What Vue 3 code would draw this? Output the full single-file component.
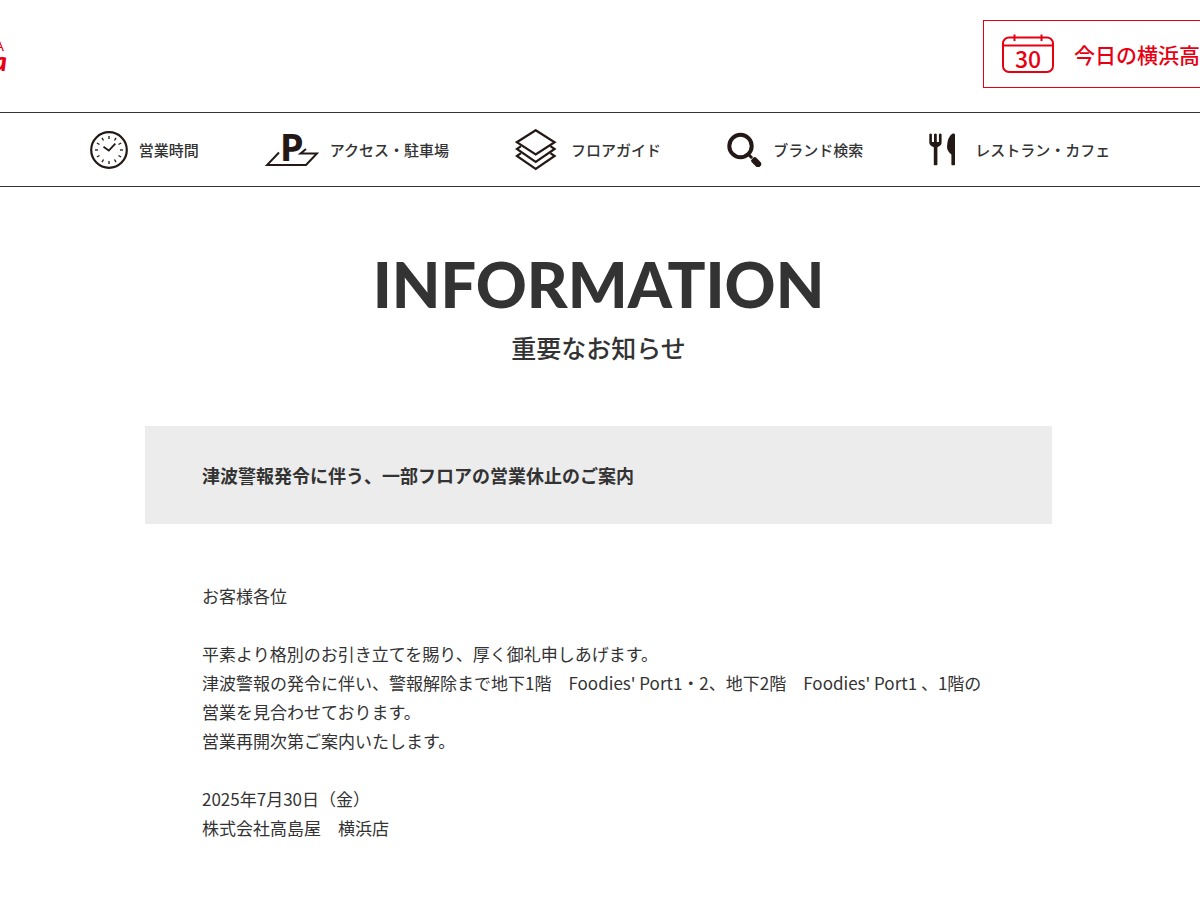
<script setup>
const notice = [
  ['お客様各位'],
  [
    '平素より格別のお引き立てを賜り、厚く御礼申しあげます。',
    "津波警報の発令に伴い、警報解除まで地下1階　Foodies' Port1・2、地下2階　Foodies' Port1 、1階の",
    '営業を見合わせております。',
    '営業再開次第ご案内いたします。',
  ],
  ['2025年7月30日（金）', '株式会社高島屋　横浜店'],
]
const ticks = [0, 30, 60, 90, 120, 150, 180, 210, 240, 270, 300, 330]
</script>

<template>
  <div class="page">
    <header class="header">
      <a class="logo" href="#">
        <span class="logo-place">YOKOHAMA</span>
        <span class="logo-name">Takashimaya</span>
      </a>
      <a class="today" href="#">
        <svg width="52" height="40" viewBox="0 0 52 40" aria-hidden="true">
          <g fill="none" stroke="#e60012" stroke-width="2">
            <rect x="1" y="3.5" width="50" height="34.5" rx="6" />
            <path d="M1 11.5H51M12.5 0.5V7M39.5 0.5V7" />
          </g>
          <text class="day" x="26" y="33.5" text-anchor="middle">30</text>
        </svg>
        <span>今日の横浜高島屋</span>
      </a>
    </header>

    <nav class="nav">
      <a href="#">
        <svg width="38" height="38" viewBox="0 0 38 38" fill="none" stroke="#231815" aria-hidden="true">
          <circle cx="19" cy="19" r="17.8" stroke-width="2.2" />
          <path v-for="t in ticks" :key="t" d="M19 5V8" stroke-width="1.3" :transform="`rotate(${t} 19 19)`" />
          <path d="M13.5 15.8L18.8 19.5L25.3 12.6" stroke-width="1.8" />
        </svg>
        <span>営業時間</span>
      </a>
      <a href="#">
        <svg width="54" height="34" viewBox="0 0 54 34" fill="none" stroke="#231815" stroke-width="2" aria-hidden="true">
          <path d="M14 19.5L2 32H41L52 20.5H35.5L41 16" />
          <text class="parking" x="15" y="27.5">P</text>
        </svg>
        <span>アクセス・駐車場</span>
      </a>
      <a href="#">
        <svg width="45" height="42" viewBox="0 0 45 42" fill="none" stroke="#231815" stroke-width="2.2" aria-hidden="true">
          <path d="M20.7 1.2L39.6 13.2L20.7 25.5L1.8 13.2Z" />
          <path d="M6 17.2L1.8 20L20.7 32.8L39.6 20L35.4 17.2" />
          <path d="M6 24.2L1.8 27L20.7 40L39.6 27L35.4 24.2" />
        </svg>
        <span>フロアガイド</span>
      </a>
      <a href="#">
        <svg width="35" height="35" viewBox="0 0 35 35" fill="none" stroke="#231815" aria-hidden="true">
          <circle cx="13.5" cy="14" r="11.2" stroke-width="4" />
          <path d="M21.5 22.5L25.5 26.5" stroke-width="3" />
          <path d="M27.5 28.5L31 32" stroke-width="6.4" stroke-linecap="round" />
          <path d="M23.3 28.3L27.3 24.3" stroke="#fff" stroke-width="0.8" />
        </svg>
        <span>ブランド検索</span>
      </a>
      <a href="#">
        <svg width="35" height="33" viewBox="0 0 35 33" fill="#231815" aria-hidden="true">
          <path d="M0.3 1.2Q1.6-0.2 2.9 1.2V9H5V1.2Q6.4-0.2 7.8 1.2V9H9.9V1.2Q11.3-0.2 12.6 1.2V9.5Q12.6 12.5 8.4 14.3V31.5Q8.4 32.3 7.6 32.3H5.6Q4.8 32.3 4.8 31.5V14.3Q0.3 12.5 0.3 9.5Z" />
          <path d="M26 1.5V31.5Q26 32.3 25.2 32.3H23.2Q22.4 32.3 22.4 31.5V21.5Q18 18 18 13.5Q18.5 4 23.2 0.8Q25.6-0.2 26 1.5Z" />
        </svg>
        <span>レストラン・カフェ</span>
      </a>
    </nav>

    <main class="main">
      <h1>INFORMATION</h1>
      <p class="subtitle">重要なお知らせ</p>
      <h2>津波警報発令に伴う、一部フロアの営業休止のご案内</h2>
      <div class="notice">
        <p v-for="(paragraph, i) in notice" :key="i">
          <template v-for="(line, j) in paragraph" :key="j"><br v-if="j" />{{ line }}</template>
        </p>
      </div>
    </main>
  </div>
</template>

<style>
body {
  margin: 0;
  background: #fff;
}
</style>

<style scoped>
.page {
  overflow: hidden;
  color: #333;
  font-family: "Noto Sans CJK JP", sans-serif;
}
a {
  color: inherit;
  text-decoration: none;
  white-space: nowrap;
}
svg {
  display: block;
  flex: none;
}
.header {
  display: flex;
  justify-content: space-between;
  align-items: flex-start;
  padding: 20px 0 24px;
}
.logo {
  display: flex;
  flex-direction: column;
  align-items: flex-end;
  width: 7px;
  padding-top: 18px;
  color: #e60012;
}
.logo-place {
  padding-right: 3px;
  font: 14px/16px Lato, sans-serif;
}
.logo-name {
  font: italic 900 26px/14px Lato, sans-serif;
}
.today {
  box-sizing: border-box;
  display: flex;
  align-items: center;
  gap: 20px;
  width: 280px;
  height: 68px;
  margin-right: -63px;
  padding-left: 18px;
  border: 1px solid #e60012;
  color: #e60012;
  font-size: 21px;
  font-weight: 500;
}
.day {
  fill: #e60012;
  font-size: 23px;
  font-weight: 500;
}
.nav {
  display: flex;
  justify-content: center;
  gap: 66px;
  height: 73px;
  border-top: 1px solid #333;
  border-bottom: 1px solid #333;
  font-size: 15px;
  font-weight: 500;
}
.nav a {
  display: flex;
  align-items: center;
  gap: 11px;
}
.parking {
  fill: #231815;
  stroke: none;
  font: bold 38px "Noto Sans", sans-serif;
}
.main {
  padding: 64px 148px 60px 145px;
}
h1 {
  margin: 0;
  font: 900 63px/66px Lato, sans-serif;
  text-align: center;
}
.subtitle {
  margin: 10px 0 59px;
  font-size: 25px;
  font-weight: 500;
  line-height: 40px;
  text-align: center;
}
h2 {
  margin: 0 0 57px;
  padding: 34px 57px;
  background: #ececec;
  font-size: 18px;
  font-weight: 700;
  line-height: 30px;
}
.notice {
  padding: 0 57px;
  font-size: 17px;
  line-height: 29px;
}
.notice p {
  margin: 0 0 29px;
}
</style>
